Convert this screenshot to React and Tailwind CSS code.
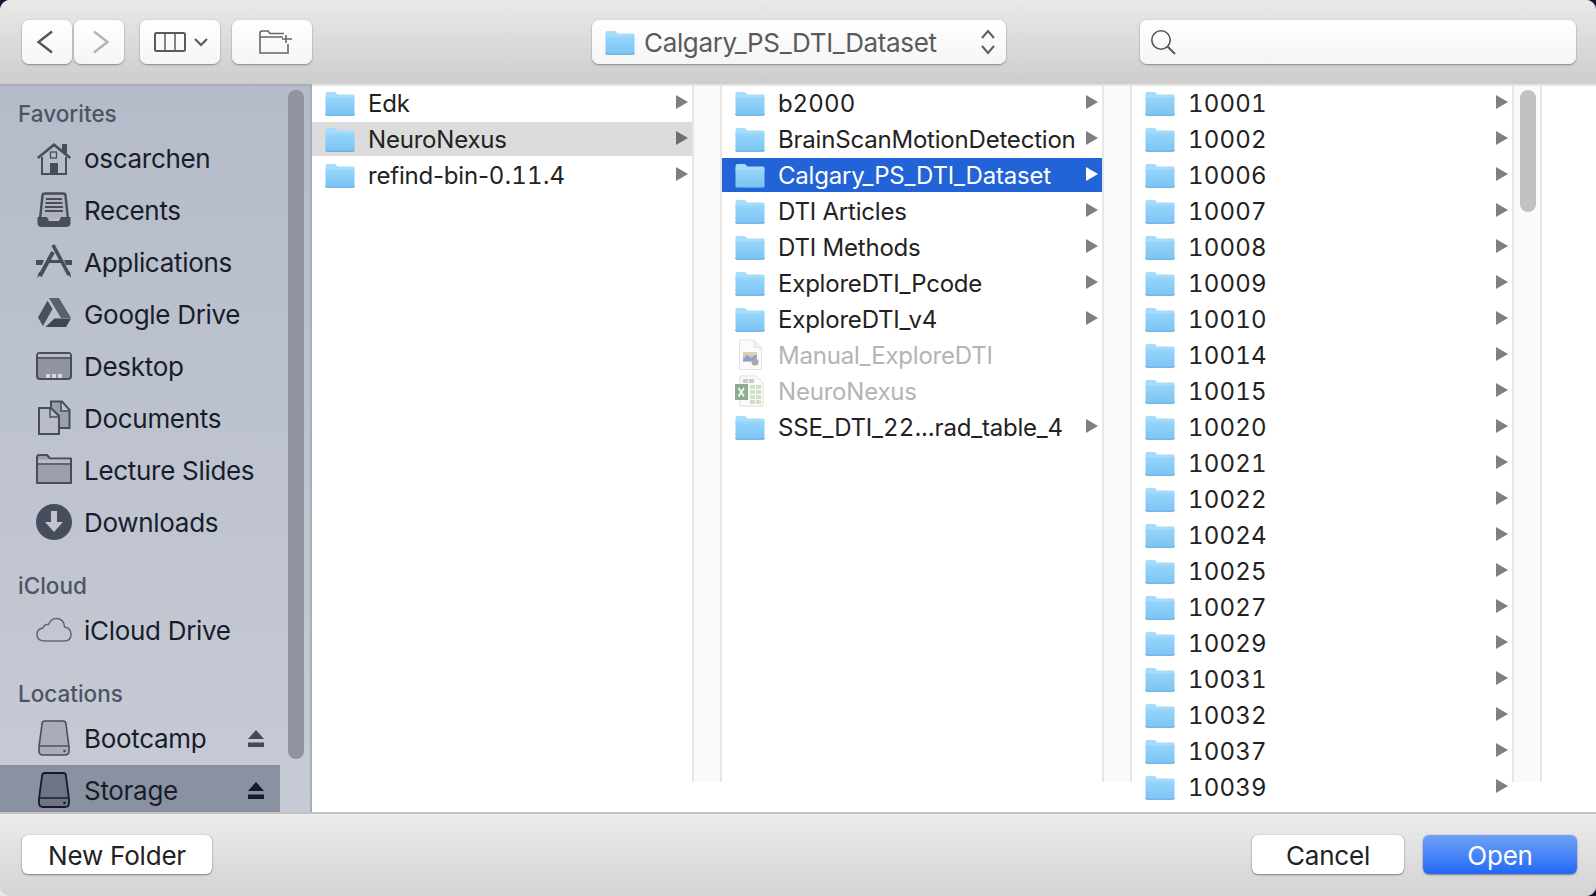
import { useId } from "react";

const font = { fontFamily: "Inter, 'Noto Sans', sans-serif" };

const col1 = [
  { name: "Edk" },
  { name: "NeuroNexus", active: true },
  { name: "refind-bin-0.11.4" },
];

const col2 = [
  { name: "b2000" },
  { name: "BrainScanMotionDetection" },
  { name: "Calgary_PS_DTI_Dataset", selected: true },
  { name: "DTI Articles" },
  { name: "DTI Methods" },
  { name: "ExploreDTI_Pcode" },
  { name: "ExploreDTI_v4" },
  { name: "Manual_ExploreDTI", kind: "doc" },
  { name: "NeuroNexus", kind: "xls" },
  { name: "SSE_DTI_22...rad_table_4" },
];

// last row only peeks out above the footer, its label is below the fold
const col3 = [
  "10001", "10002", "10006", "10007", "10008", "10009", "10010", "10014",
  "10015", "10020", "10021", "10022", "10024", "10025", "10027", "10029",
  "10031", "10032", "10037", "10039", "",
].map((name) => ({ name }));

function FolderIcon({ className = "w-[30px] h-[25px]" }) {
  const id = useId();
  return (
    <svg viewBox="0 0 30 25" className={className}>
      <defs>
        <linearGradient id={id} x1="0" y1="0" x2="0" y2="1">
          <stop offset="0" stopColor="#95d5fb" />
          <stop offset="1" stopColor="#7cc4f4" />
        </linearGradient>
      </defs>
      <path d="M0.5 3 Q0.5 1 2.5 1 H9 Q10.5 1 11.5 2.4 L12.5 3.6 H28 Q29.5 3.6 29.5 5 V8 H0.5 Z" fill="#a5dcfb" />
      <path d="M0.5 6.5 H29.5 V23 Q29.5 24.3 28 24.3 H2 Q0.5 24.3 0.5 23 Z" fill={`url(#${id})`} />
      <path d="M0.5 23 Q0.5 24.3 2 24.3 H28 Q29.5 24.3 29.5 23" fill="none" stroke="#5fa8dc" strokeWidth="1" />
    </svg>
  );
}

function DocIcon() {
  return (
    <svg viewBox="0 0 30 32" className="w-[30px] h-[32px]">
      <path d="M4.5 1 H19 L26.5 8.5 V30.5 H4.5 Z" fill="#fbfbfb" stroke="#e2e2e2" />
      <path d="M19 1 V8.5 H26.5" fill="#f0f0f0" stroke="#e2e2e2" />
      <rect x="8" y="13" width="14" height="10" fill="#b9c8de" />
      <path d="M8 20 L12 16 L16 19 L22 15 V19 L16 22 H8 Z" fill="#8fa3c0" />
      <rect x="8" y="13" width="14" height="3" fill="#e5cfa8" />
      <circle cx="20" cy="23" r="3.5" fill="#a9a9a9" />
    </svg>
  );
}

function XlsIcon() {
  return (
    <svg viewBox="0 0 30 32" className="w-[30px] h-[32px]">
      <path d="M5 1 H21 L28 8 V31 H5 Z" fill="#fafafa" stroke="#dedede" />
      <rect x="8" y="4" width="5" height="4" fill="#c9c9c9" />
      <rect x="14" y="4" width="5" height="4" fill="#c9c9c9" />
      {[10, 15, 20, 25].map((y) => (
        <g key={y}>
          <rect x="15" y={y} width="5" height="4" fill="#cfe2c8" />
          <rect x="21" y={y} width="5" height="4" fill="#cfe2c8" />
        </g>
      ))}
      <rect x="0" y="9" width="13" height="16" fill="#8cab90" />
      <path d="M3.5 13 L9 21.5 M9 13 L3.5 21.5" stroke="#f4f7f4" strokeWidth="1.8" />
    </svg>
  );
}

// digits are wider in the system font than in Inter, hyphens are not
function RowName({ name }) {
  return name.split(/(\d+)/).map((part, i) =>
    i % 2 ? (
      <span key={i} className="tracking-[0.2px] tabular-nums">
        {part}
      </span>
    ) : (
      part
    ),
  );
}

function Row({ item }) {
  const muted = item.kind === "doc" || item.kind === "xls";
  let rowClass = "text-[#222222]";
  if (item.selected) rowClass = "bg-[#2263d8] text-white";
  if (item.active) rowClass = "bg-[#dcdcdc] text-[#222222]";
  if (muted) rowClass = "text-[#b4b4b4]";

  let arrowColor = "border-l-[#7f7f7f]";
  if (item.selected) arrowColor = "border-l-white";
  if (item.active) arrowColor = "border-l-[#6e6e6e]";

  return (
    <div className={`mb-[2px] flex h-[34px] shrink-0 items-center pl-[12px] ${rowClass}`}>
      <div className="flex w-[32px] shrink-0 justify-center">
        {item.kind === "doc" ? <DocIcon /> : item.kind === "xls" ? <XlsIcon /> : <FolderIcon />}
      </div>
      <span className="ml-[12px] mt-[1px] whitespace-nowrap text-[24px] leading-[34px] tracking-[-0.2px]">
        <RowName name={item.name} />
      </span>
      {!muted && (
        <span className={`mr-[4px] -mt-[2px] ml-auto h-0 w-0 border-y-[7px] border-l-[12px] border-y-transparent ${arrowColor}`} />
      )}
    </div>
  );
}

function Column({ rows }) {
  return (
    <div className="h-[726px] w-[380px] shrink-0 overflow-hidden">
      {rows.map((r) => (
        <Row key={r.name} item={r} />
      ))}
    </div>
  );
}

function Gap({ children }) {
  return (
    <div className="relative h-[696px] w-[30px] shrink-0 border-x-2 border-[#e6e6e6] bg-[#fafafa]">
      {children}
    </div>
  );
}

// sidebar glyphs, 36x36 box
const sideStroke = { fill: "none", stroke: "currentColor", strokeWidth: 2 };

const sideIcons = {
  home: (
    <svg viewBox="0 0 36 36" className="h-[36px] w-[36px]">
      <path d="M1 17 L18 3 L26 9.5 V4 H31 V13.5 L35 17 L33.5 19 L18 6.5 L2.5 19 Z" fill="currentColor" />
      <path d="M6 17 V34 H30 V17" {...sideStroke} />
      <rect x="14.5" y="12" width="6" height="6" {...sideStroke} strokeWidth="1.3" />
      <rect x="14" y="23" width="8" height="11" fill="currentColor" />
    </svg>
  ),
  recents: (
    <svg viewBox="0 0 36 36" className="h-[36px] w-[36px]">
      <path d="M4 27 L6.5 3.5 Q6.5 1.5 9 1.5 H27 Q29.5 1.5 29.5 3.5 L32 27" fill="#aeb3be" stroke="currentColor" strokeWidth="2.4" />
      <path d="M10 7 H26 M9.5 11 H26.5 M9 15 H27 M9 19 H27" stroke="currentColor" strokeWidth="1.8" />
      <path d="M1.5 25 H11 L13 29 H23 L25 25 H34.5 V31 Q34.5 35 30 35 H6 Q1.5 35 1.5 31 Z" fill="currentColor" />
    </svg>
  ),
  apps: (
    <svg viewBox="0 0 36 36" className="h-[36px] w-[36px]">
      <path d="M0 16 H8 L6 21 H0 Z M28 16 H36 V21 H30 Z M11 16 H25 V19 H11 Z" fill="currentColor" />
      <path d="M17 8 L4 32" stroke="currentColor" strokeWidth="4" />
      <path d="M17 1 L33 31" stroke="currentColor" strokeWidth="3.6" />
      <path d="M1 34 L3 28 L6 30 Z M35 34 L31 29 L34 28 Z" fill="currentColor" />
    </svg>
  ),
  drive: (
    <svg viewBox="0 0 36 36" className="h-[36px] w-[36px]">
      <path d="M13 2 H23 L35 22 H25 Z" fill="#5a6070" />
      <path d="M11.5 4.5 L16.5 13 L7 30 L2 21.5 Z" fill="#4a505e" />
      <path d="M18.5 22.5 H35 L30 31 H9.5 Z" fill="#3f4554" />
    </svg>
  ),
  desktop: (
    <svg viewBox="0 0 36 36" className="h-[36px] w-[36px]">
      <rect x="1" y="5" width="34" height="26" rx="3" fill="#8f949f" stroke="currentColor" strokeWidth="2" />
      <path d="M2 6 H34 V9 H2 Z" fill="#b7bcc8" />
      <path d="M1 10 H35" stroke="currentColor" strokeWidth="1.5" />
      <path d="M10 26 H14 V30 H10 Z M16 26 H20 V30 H16 Z M22 26 H26 V30 H22 Z" fill="#d4d7de" />
    </svg>
  ),
  docs: (
    <svg viewBox="0 0 36 36" className="h-[36px] w-[36px]">
      <path d="M15 1.5 H26 L33.5 10 V28 H15 Z" fill="#9a9fab" stroke="currentColor" strokeWidth="2" />
      <path d="M25 2 V11 H33" fill="#bcc1cc" stroke="currentColor" strokeWidth="1.5" />
      <path d="M3 8 H15 L23 16 V34 H3 Z" fill="#b7bcc8" stroke="currentColor" strokeWidth="2" />
      <path d="M14 8 V17 H23" fill="none" stroke="currentColor" strokeWidth="1.5" />
    </svg>
  ),
  folder: (
    <svg viewBox="0 0 36 36" className="h-[36px] w-[36px]">
      <path d="M1 6 Q1 3 3 3 H11 L14 6.5 H35 V31 H1 Z" fill="#9a9fab" stroke="currentColor" strokeWidth="2" strokeLinejoin="round" />
      <path d="M2 12 H34" stroke="currentColor" strokeWidth="1.4" />
      <path d="M2 7.5 H34 V11 H2 Z" fill="#b9bdc9" />
    </svg>
  ),
  download: (
    <svg viewBox="0 0 36 36" className="h-[36px] w-[36px]">
      <circle cx="18" cy="18" r="18" fill="currentColor" />
      <path d="M15 7 H21 V18 H27 L18 28 L9 18 H15 Z" fill="#c0c5d0" />
    </svg>
  ),
  cloud: (
    <svg viewBox="0 0 36 36" className="h-[36px] w-[36px]">
      <path
        d="M9 29 Q1 29 1 22.5 Q1 17 7 16 Q8 12 12.5 12.5 Q15 6 21 6.5 Q28 7 28.5 15 Q35 16 35 22.5 Q35 29 28 29 Z"
        fill="none"
        stroke="currentColor"
        strokeWidth="1.5"
        opacity="0.8"
      />
    </svg>
  ),
  hdd: (
    <svg viewBox="0 0 36 36" className="h-[36px] w-[36px]">
      <path d="M6 4 Q6 1 9 1 H27 Q30 1 30 4 L33 27 V31 Q33 35 29 35 H7 Q3 35 3 31 V27 Z" fill="#a8adb9" stroke="currentColor" strokeWidth="1.6" />
      <path d="M3 26 H33" stroke="currentColor" strokeWidth="1.4" />
      <circle cx="28.5" cy="31" r="1.3" fill="currentColor" />
    </svg>
  ),
  hddDark: (
    <svg viewBox="0 0 36 36" className="h-[36px] w-[36px]">
      <path d="M6 4 Q6 1 9 1 H27 Q30 1 30 4 L33 27 V31 Q33 35 29 35 H7 Q3 35 3 31 V27 Z" fill="#6e7486" stroke="#141a28" strokeWidth="1.8" />
      <path d="M3 26 H33" stroke="#141a28" strokeWidth="1.4" />
      <circle cx="28.5" cy="31" r="1.3" fill="#141a28" />
    </svg>
  ),
};

function Eject({ dark }) {
  return (
    <svg viewBox="0 0 16 17" className={`h-[17px] w-[16px] ${dark ? "text-[#141a28]" : "text-[#444a58]"}`}>
      <path d="M8 0 L16 9 H0 Z M0 12.5 H16 V17 H0 Z" fill="currentColor" />
    </svg>
  );
}

function SideHeader({ label, className }) {
  return (
    <div className={`flex h-[38px] shrink-0 items-center pl-[18px] text-[22.5px] font-medium text-[#4e5463] ${className}`}>
      {label}
    </div>
  );
}

function SideItem({ icon, label, eject, selected }) {
  return (
    <div className="flex h-[52px] shrink-0 items-center py-[3px]">
      <div
        className={`flex w-[280px] shrink-0 items-center pl-[36px] pr-[16px] ${selected ? "h-[50px] bg-[#8a91a1]" : "h-[46px]"}`}
      >
        <span className={selected ? "text-[#141a28]" : "text-[#474d5c]"}>{sideIcons[icon]}</span>
        <span className="ml-[12px] whitespace-nowrap text-[26px] tracking-[-0.3px] text-[#181d2b]">{label}</span>
        {eject && (
          <span className="ml-auto">
            <Eject dark={selected} />
          </span>
        )}
      </div>
    </div>
  );
}

function Sidebar() {
  return (
    <aside className="relative flex h-[728px] w-[312px] shrink-0 flex-col overflow-hidden border-t-2 border-r-2 border-t-[#a6acb9] border-r-[#a7adba] bg-gradient-to-b from-[#b5bbc8] to-[#c6cbd5]">
      <SideHeader label="Favorites" className="mt-[9px] -mb-[1px]" />
      <SideItem icon="home" label="oscarchen" />
      <SideItem icon="recents" label="Recents" />
      <SideItem icon="apps" label="Applications" />
      <SideItem icon="drive" label="Google Drive" />
      <SideItem icon="desktop" label="Desktop" />
      <SideItem icon="docs" label="Documents" />
      <SideItem icon="folder" label="Lecture Slides" />
      <SideItem icon="download" label="Downloads" />
      <SideHeader label="iCloud" className="mt-[19px] -mb-[1px]" />
      <SideItem icon="cloud" label="iCloud Drive" />
      <SideHeader label="Locations" className="mt-[19px] -mb-[1px]" />
      <SideItem icon="hdd" label="Bootcamp" eject />
      <SideItem icon="hddDark" label="Storage" eject selected />
      <div className="absolute top-[4px] left-[288px] h-[669px] w-[16px] rounded-full bg-[#8f949e]" />
    </aside>
  );
}

const toolBtn =
  "flex h-[44px] items-center justify-center rounded-[7px] bg-gradient-to-b from-white to-[#f5f5f5] shadow-[0_1px_2px_rgba(0,0,0,0.35),0_0_1px_rgba(0,0,0,0.2)]";

function Toolbar() {
  return (
    <header className="flex h-[84px] shrink-0 items-center bg-gradient-to-b from-[#e9e9e9] to-[#cdcdcd] pl-[22px]">
      <div className={`${toolBtn} w-[50px] pr-[4px]`}>
        <svg viewBox="0 0 18 24" className="h-[24px] w-[18px]">
          <path d="M16 1.5 L2.5 12 L16 22.5" fill="none" stroke="#555555" strokeWidth="2.4" />
        </svg>
      </div>
      <div className={`${toolBtn} ml-[2px] w-[50px] pl-[4px]`}>
        <svg viewBox="0 0 18 24" className="h-[24px] w-[18px]">
          <path d="M2 1.5 L15.5 12 L2 22.5" fill="none" stroke="#b3b3b3" strokeWidth="2.4" />
        </svg>
      </div>
      <div className={`${toolBtn} ml-[16px] w-[80px]`}>
        <svg viewBox="0 0 32 20" className="ml-[2px] h-[20px] w-[32px]">
          <rect x="1" y="1" width="30" height="18" rx="1.5" fill="none" stroke="#5b5b5b" strokeWidth="2" />
          <path d="M11 1 V19 M21 1 V19" stroke="#5b5b5b" strokeWidth="1.5" />
        </svg>
        <svg viewBox="0 0 14 9" className="ml-[8px] h-[9px] w-[14px]">
          <path d="M1 1 L7 7 L13 1" fill="none" stroke="#5b5b5b" strokeWidth="2.2" />
        </svg>
      </div>
      <div className={`${toolBtn} ml-[12px] w-[80px] pl-[8px]`}>
        <svg viewBox="0 0 34 24" className="h-[24px] w-[34px]">
          <path d="M1 3 Q1 1 3 1 H9 L11 3.5 H25 M29 14 V23 H1 V3 M1 7 H24" fill="none" stroke="#666666" strokeWidth="1.6" />
          <path d="M27 5 V13 M23 9 H33" stroke="#666666" strokeWidth="1.6" />
        </svg>
      </div>
      <div className={`${toolBtn} ml-[280px] w-[414px] !justify-start pl-[13px]`}>
        <FolderIcon />
        <span className="ml-[9px] whitespace-nowrap text-[26px] tracking-[-0.35px] text-[#5a5a5a]">Calgary_PS_DTI_Dataset</span>
        <svg viewBox="0 0 16 28" className="ml-auto mr-[10px] h-[28px] w-[16px]">
          <path d="M2 10 L8 3 L14 10 M2 18 L8 25 L14 18" fill="none" stroke="#5b5b5b" strokeWidth="2" />
        </svg>
      </div>
      <div className={`${toolBtn} ml-[134px] w-[436px] !justify-start pl-[10px]`}>
        <svg viewBox="0 0 26 26" className="h-[26px] w-[26px]">
          <circle cx="11" cy="11" r="9.2" fill="none" stroke="#555555" strokeWidth="1.6" />
          <path d="M17.5 17.5 L25 25" stroke="#555555" strokeWidth="2" />
        </svg>
      </div>
    </header>
  );
}

function Footer() {
  const btn =
    "flex h-[39px] items-center justify-center rounded-[6px] pt-[2px] text-[26px] tracking-[-0.2px] shadow-[0_1px_2px_rgba(0,0,0,0.4),0_0_1px_rgba(0,0,0,0.3)]";
  return (
    <footer className="flex h-[84px] shrink-0 items-start border-t-2 border-[#c3c3c3] bg-gradient-to-b from-[#ececec] to-[#d3d3d3] pt-[21px] pl-[22px]">
      <div className={`${btn} w-[190px] bg-white text-[#222222]`}>New Folder</div>
      <div className={`${btn} ml-auto w-[152px] bg-white text-[#222222]`}>Cancel</div>
      <div className={`${btn} ml-[19px] mr-[19px] w-[154px] bg-gradient-to-b from-[#6fa0f6] to-[#2268f6] text-white`}>Open</div>
    </footer>
  );
}

export default function App() {
  return (
    <div className="relative h-[896px] w-[1596px] overflow-hidden bg-[#111a30]" style={font}>
      <div className="absolute bottom-0 left-0 h-[14px] w-[14px] bg-[#e8e8e8]" />
      <div className="relative flex h-full flex-col overflow-hidden rounded-[10px] bg-white">
        <Toolbar />
        <div className="flex h-[728px] shrink-0 items-start">
          <Sidebar />
          <div className="flex h-[728px] min-w-0 flex-1 items-start border-t-2 border-[#e4e4e4]">
            <Column rows={col1} />
            <Gap />
            <Column rows={col2} />
            <Gap />
            <Column rows={col3} />
            <Gap>
              <div className="absolute top-[4px] left-[6px] h-[122px] w-[16px] rounded-full bg-[#c1c1c1]" />
            </Gap>
          </div>
        </div>
        <Footer />
      </div>
    </div>
  );
}
